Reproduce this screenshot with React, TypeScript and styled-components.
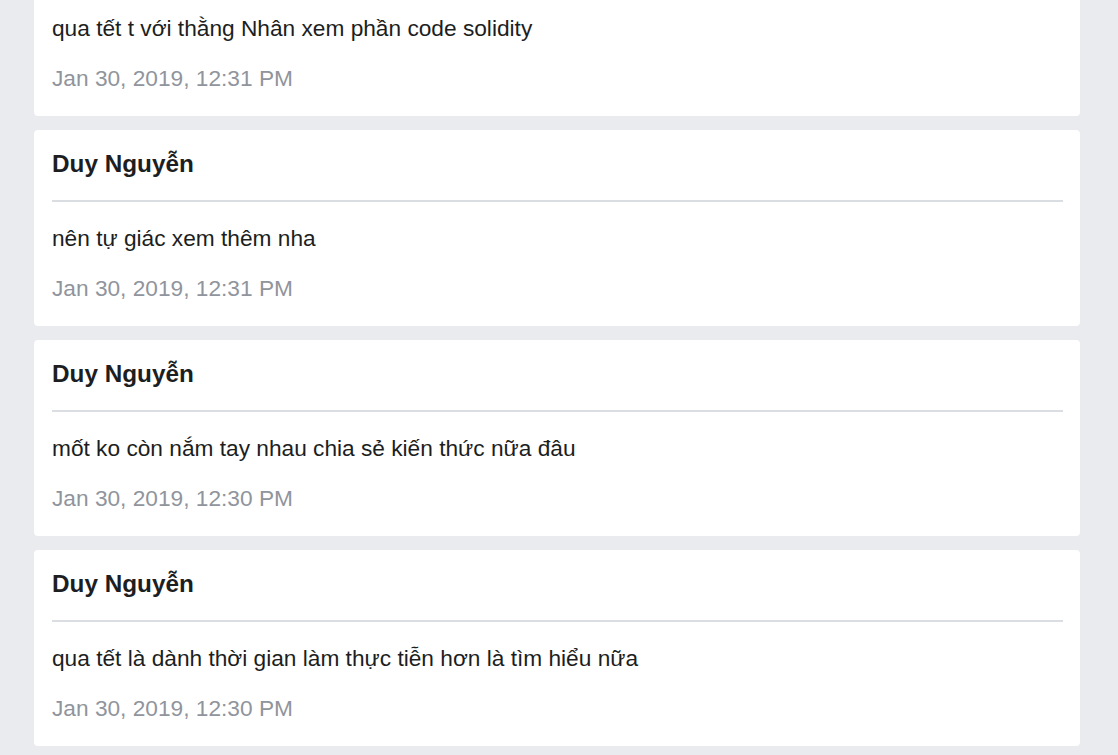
import React from "react";
import styled, { createGlobalStyle } from "styled-components";

const GlobalStyle = createGlobalStyle`
  html, body {
    margin: 0;
    padding: 0;
    background: #e9ebee;
    font-family: "Liberation Sans", Arial, Helvetica, sans-serif;
    overflow: hidden;
  }
`;

const Page = styled.main`
  width: 1118px;
  height: 755px;
  overflow: hidden;
  background: #e9ebee;
  box-sizing: border-box;
  padding: 0 38px 0 34px;
`;

const List = styled.div`
  display: flex;
  flex-direction: column;
  gap: 14px;
  margin-top: -80px;
`;

const Card = styled.article`
  background: #ffffff;
  border-radius: 4px;
  height: 196px;
  box-sizing: border-box;
  padding: 0 17px 13px 18px;
  display: flex;
  flex-direction: column;
`;

const Header = styled.div`
  padding: 22px 0 24px;
  border-bottom: 2px solid #dadde1;
`;

const Name = styled.h3`
  margin: 0;
  font-size: 24.3px;
  line-height: 24px;
  font-weight: 700;
  color: #1c1e21;
`;

const Message = styled.p`
  margin: 11px 0 0;
  font-size: 22.7px;
  line-height: 50px;
  color: #1c1e21;
`;

const Time = styled.time`
  display: block;
  font-size: 22.7px;
  line-height: 50px;
  color: #90949c;
`;

type Msg = { name: string; text: string; time: string };

const messages: Msg[] = [
  { name: "Duy Nguyễn", text: "qua tết t với thằng Nhân xem phần code solidity", time: "Jan 30, 2019, 12:31 PM" },
  { name: "Duy Nguyễn", text: "nên tự giác xem thêm nha", time: "Jan 30, 2019, 12:31 PM" },
  { name: "Duy Nguyễn", text: "mốt ko còn nắm tay nhau chia sẻ kiến thức nữa đâu", time: "Jan 30, 2019, 12:30 PM" },
  { name: "Duy Nguyễn", text: "qua tết là dành thời gian làm thực tiễn hơn là tìm hiểu nữa", time: "Jan 30, 2019, 12:30 PM" },
];

export default function App() {
  return (
    <>
      <GlobalStyle />
      <Page>
        <List>
          {messages.map((m, i) => (
            <Card key={i}>
              <Header>
                <Name>{m.name}</Name>
              </Header>
              <Message>{m.text}</Message>
              <Time>{m.time}</Time>
            </Card>
          ))}
        </List>
      </Page>
    </>
  );
}
